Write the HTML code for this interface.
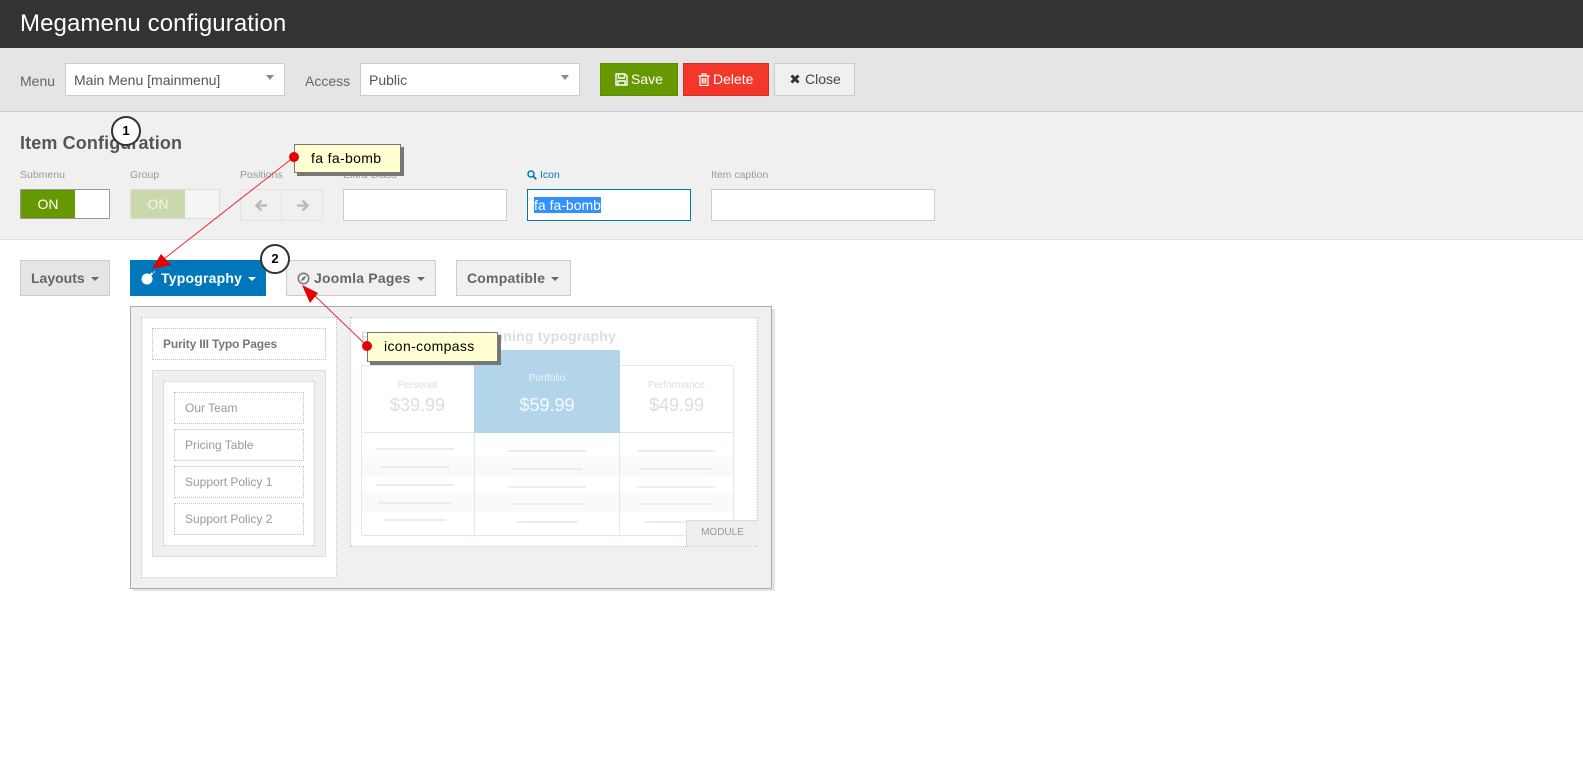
<!DOCTYPE html>
<html><head><meta charset="utf-8"><style>
html,body{margin:0;padding:0;width:1583px;height:775px;overflow:hidden;background:#fff;font-family:"Liberation Sans",sans-serif}
.a,.t{position:absolute;box-sizing:border-box}
.t{white-space:nowrap;line-height:1}
.sel,.inp{background:#fff;border:1px solid #ccc}
.btn{border:1px solid #ccc;font-size:14px;color:#fff;line-height:30px;white-space:nowrap}
.lb{font-size:10.5px;color:#999;top:170px}
.tab{font-size:14px;font-weight:bold;color:#666;border:1px solid #ccc;background:#f0f0f0;line-height:34px;top:260px;height:36px;white-space:nowrap;letter-spacing:.2px}
.car{display:inline-block;width:0;height:0;border:4px solid transparent;border-top-color:currentColor;border-bottom:0;vertical-align:2px;margin-left:6px}
.dot{border:1px dotted #c2c2c2;background:#fff}
.it{left:174px;width:130px;height:32px;border:1px dotted #c2c2c2;font-size:12px;color:#999;line-height:30px;padding-left:10px;white-space:nowrap}
.ln{height:2px;background:#e3f0f9}
.note{background:#ffffd2;border:1px solid #777;box-shadow:3px 3px 0 #777;font-size:14px;color:#000;white-space:nowrap;letter-spacing:.35px}
.cir{width:30px;height:30px;border:2px solid #333;border-radius:50%;background:#fff;font-size:13px;font-weight:bold;text-align:center;line-height:26px;color:#000}
</style></head><body>
<div class="a" style="left:0;top:0;width:1583px;height:48px;background:#333"></div>
<div class="t" style="left:20px;top:10px;font-size:24px;color:#fff;line-height:28px;letter-spacing:.1px">Megamenu configuration</div>

<div class="a" style="left:0;top:48px;width:1583px;height:64px;background:#e5e5e5;border-bottom:1px solid #ccc"></div>
<div class="t" style="left:20px;top:74px;font-size:14px;color:#666">Menu</div>
<div class="a sel" style="left:65px;top:63px;width:220px;height:33px"></div>
<div class="t" style="left:74px;top:73px;font-size:14px;color:#555">Main Menu [mainmenu]</div>
<div class="a" style="left:266px;top:75px;border:4px solid transparent;border-top:5px solid #888;border-bottom:0"></div>
<div class="t" style="left:305px;top:74px;font-size:14px;color:#666">Access</div>
<div class="a sel" style="left:360px;top:63px;width:220px;height:33px"></div>
<div class="t" style="left:369px;top:73px;font-size:14px;color:#555">Public</div>
<div class="a" style="left:561px;top:75px;border:4px solid transparent;border-top:5px solid #888;border-bottom:0"></div>

<div class="a btn" style="left:600px;top:63px;width:78px;height:33px;background:#690;border-color:#5f8c00;padding-left:30px">Save</div>
<svg class="a" style="left:615px;top:73px" width="13" height="13" viewBox="0 0 13 13"><path d="M1 1h9l2 2v9H1z M3.500 1v4h6V1 M3 12V8h7v4" fill="none" stroke="#fff" stroke-width="1.400"/></svg>
<div class="a btn" style="left:683px;top:63px;width:86px;height:33px;background:#f3372b;border-color:#d42d22;padding-left:29px">Delete</div>
<svg class="a" style="left:698px;top:73px" width="12" height="13" viewBox="0 0 12 13"><path d="M0.500 3h11M4 3V1h4v2M2 3v9.500h8V3M4.300 5v5.500M6 5v5.500M7.700 5v5.500" fill="none" stroke="#fff" stroke-width="1.200"/></svg>
<div class="a btn" style="left:774px;top:63px;width:81px;height:33px;background:#f0f0f0;color:#444;padding-left:30px">Close</div>
<svg class="a" style="left:790px;top:74px" width="10" height="10" viewBox="0 0 10 10"><path d="M1.500 1.500l7 7M8.500 1.500l-7 7" stroke="#333" stroke-width="3"/></svg>

<div class="a" style="left:0;top:112px;width:1583px;height:128px;background:#f0f0f0;border-bottom:1px solid #e3e3e3"></div>
<div class="t" style="left:20px;top:133px;font-size:18px;font-weight:bold;color:#555;line-height:20px;letter-spacing:.12px">Item Configuration</div>

<div class="t lb" style="left:20px">Submenu</div>
<div class="a" style="left:20px;top:189px;width:90px;height:30px;background:#fff;border:1px solid #999"></div>
<div class="a" style="left:21px;top:190px;width:54px;height:28px;background:#690;color:#fff;font-size:14px;text-align:center;line-height:28px">ON</div>

<div class="t lb" style="left:130px">Group</div>
<div class="a" style="left:130px;top:189px;width:90px;height:30px;background:#f5f5f5;border:1px solid #ddd"></div>
<div class="a" style="left:131px;top:190px;width:54px;height:28px;background:#cad9ac;color:#f3f6ec;font-size:14px;text-align:center;line-height:28px">ON</div>

<div class="t lb" style="left:240px">Positions</div>
<div class="a" style="left:240px;top:189px;width:83px;height:32px;border:1px solid #e3e3e3;background:#f0f0f0"></div>
<div class="a" style="left:281px;top:190px;width:1px;height:30px;background:#e3e3e3"></div>
<svg class="a" style="left:255px;top:199px" width="13" height="13" viewBox="0 0 13 13"><path d="M6.500 1.500l-5 5 5 5M2 6.500h10" fill="none" stroke="#bbb" stroke-width="2.600"/></svg>
<svg class="a" style="left:296px;top:199px" width="13" height="13" viewBox="0 0 13 13"><path d="M6.500 1.500l5 5-5 5M11 6.500H1" fill="none" stroke="#bbb" stroke-width="2.600"/></svg>

<div class="t lb" style="left:343px">Extra Class</div>
<div class="a inp" style="left:343px;top:189px;width:164px;height:32px"></div>

<svg class="a" style="left:527px;top:170px" width="10" height="10" viewBox="0 0 10 10"><circle cx="4" cy="4" r="3" fill="none" stroke="#0077bb" stroke-width="1.500"/><path d="M6 6l3.300 3.300" stroke="#0077bb" stroke-width="1.800"/></svg>
<div class="t lb" style="left:540px;color:#0077bb">Icon</div>
<div class="a inp" style="left:527px;top:189px;width:164px;height:32px;border-color:#0077bb"></div>
<div class="t" style="left:534px;top:197px;font-size:14px;line-height:16px;color:#fff;background:#3390ff">fa fa-bomb</div>

<div class="t lb" style="left:711px">Item caption</div>
<div class="a inp" style="left:711px;top:189px;width:224px;height:32px"></div>

<div class="a tab" style="left:20px;width:90px;background:#e5e5e5;padding-left:10px;letter-spacing:0">Layouts<span class="car"></span></div>
<div class="a tab" style="left:130px;width:136px;background:#0077bb;border-color:#0077bb;color:#fff;padding-left:30px">Typography<span class="car"></span></div>
<svg class="a" style="left:141px;top:270px" width="16" height="15" viewBox="0 0 16 15"><circle cx="6" cy="9" r="5.500" fill="#fff"/><path d="M9.500 5l2-2" stroke="#fff" stroke-width="2"/><path d="M12.500 2.500l1.500-1" stroke="#fff" stroke-width="1"/></svg>
<div class="a tab" style="left:286px;width:150px;padding-left:27px">Joomla Pages<span class="car"></span></div>
<svg class="a" style="left:297px;top:272px" width="13" height="13" viewBox="0 0 13 13"><circle cx="6.500" cy="6.500" r="5.200" fill="none" stroke="#777" stroke-width="1.500"/><path d="M9.200 3.800L7.500 7.500 3.800 9.200 5.500 5.500z" fill="#777"/></svg>
<div class="a tab" style="left:456px;width:115px;padding-left:10px">Compatible<span class="car"></span></div>

<div class="a" style="left:133px;top:309px;width:642px;height:282px;background:#e5e5e5"></div>
<div class="a" style="left:130px;top:306px;width:642px;height:283px;background:#f0f0f0;border:1px solid #aaa"></div>

<div class="a dot" style="left:141px;top:317px;width:196px;height:261px"></div>
<div class="a dot" style="left:152px;top:328px;width:174px;height:32px;font-size:12px;font-weight:bold;color:#777;line-height:30px;padding-left:10px;white-space:nowrap;letter-spacing:-.15px">Purity III Typo Pages</div>
<div class="a" style="left:152px;top:370px;width:174px;height:187px;background:#f0f0f0;border:1px solid #ddd"></div>
<div class="a dot" style="left:163px;top:381px;width:152px;height:165px"></div>
<div class="a it" style="top:392px">Our Team</div>
<div class="a it" style="top:429px">Pricing Table</div>
<div class="a it" style="top:466px">Support Policy 1</div>
<div class="a it" style="top:503px">Support Policy 2</div>

<div class="a dot" style="left:350px;top:317px;width:408px;height:230px"></div>
<div class="t" style="left:361px;top:328px;font-size:14px;font-weight:bold;color:#ddd;line-height:16px;letter-spacing:.2px">Purity III and its stunning typography</div>

<div class="a" style="left:361px;top:457px;width:372px;height:19px;background:#fafafa"></div>
<div class="a" style="left:361px;top:493px;width:372px;height:19px;background:#fafafa"></div>
<div class="a" style="left:361px;top:365px;width:373px;height:171px;border:1px solid #d7eaf6;border-radius:2px"></div>
<div class="a" style="left:361px;top:432px;width:373px;height:1px;background:#d7eaf6"></div>
<div class="a" style="left:474px;top:432px;width:1px;height:103px;background:#d7eaf6"></div>
<div class="a" style="left:619px;top:365px;width:1px;height:170px;background:#d7eaf6"></div>
<div class="a" style="left:474px;top:350px;width:146px;height:83px;background:#b3d5ea;border-radius:2px 2px 0 0"></div>
<div class="t" style="left:361px;top:381px;width:113px;text-align:center;font-size:10px;color:#ddd">Personal</div>
<div class="t" style="left:361px;top:396px;width:113px;text-align:center;font-size:18px;color:#ddd">$39.99</div>
<div class="t" style="left:474px;top:374px;width:146px;text-align:center;font-size:10px;color:#eef5fa">Portfolio</div>
<div class="t" style="left:474px;top:396px;width:146px;text-align:center;font-size:18px;color:#f5fafd">$59.99</div>
<div class="t" style="left:620px;top:381px;width:113px;text-align:center;font-size:10px;color:#ddd">Performance</div>
<div class="t" style="left:620px;top:396px;width:113px;text-align:center;font-size:18px;color:#ddd">$49.99</div>

<div class="a ln" style="left:376px;top:448px;width:78px"></div>
<div class="a ln" style="left:380px;top:466px;width:70px"></div>
<div class="a ln" style="left:376px;top:484px;width:78px"></div>
<div class="a ln" style="left:378px;top:502px;width:74px"></div>
<div class="a ln" style="left:384px;top:519px;width:62px"></div>
<div class="a ln" style="left:508px;top:450px;width:78px"></div>
<div class="a ln" style="left:512px;top:468px;width:70px"></div>
<div class="a ln" style="left:508px;top:486px;width:78px"></div>
<div class="a ln" style="left:510px;top:503px;width:74px"></div>
<div class="a ln" style="left:517px;top:521px;width:61px"></div>
<div class="a ln" style="left:637px;top:450px;width:78px"></div>
<div class="a ln" style="left:641px;top:468px;width:70px"></div>
<div class="a ln" style="left:637px;top:486px;width:78px"></div>
<div class="a ln" style="left:639px;top:503px;width:74px"></div>
<div class="a ln" style="left:645px;top:521px;width:62px"></div>

<div class="a" style="left:686px;top:520px;width:72px;height:26px;background:#eee;border:1px solid #ddd;border-right:0;border-bottom:0;font-size:10px;color:#999;text-align:center;line-height:24px">MODULE</div>

<svg class="a" style="left:0;top:0;pointer-events:none" width="1583" height="775">
<path d="M294 157L160 262" stroke="#e8303a" stroke-width="1"/>
<path d="M152 269L161 254L171 265z" fill="#e60000"/>
<path d="M367 346L312 293" stroke="#e8303a" stroke-width="1"/>
<path d="M302 285L318 293L310 303z" fill="#e60000"/>
</svg>

<div class="a note" style="left:294px;top:144px;width:107px;height:29px;line-height:26px;padding-left:16px">fa fa-bomb</div>
<div class="a" style="left:289px;top:152px;width:10px;height:10px;border-radius:50%;background:#e60000"></div>
<div class="a note" style="left:367px;top:332px;width:131px;height:30px;line-height:27px;padding-left:16px">icon-compass</div>
<div class="a" style="left:362px;top:341px;width:10px;height:10px;border-radius:50%;background:#e60000"></div>
<div class="a cir" style="left:111px;top:116px">1</div>
<div class="a cir" style="left:260px;top:244px">2</div>
</body></html>
